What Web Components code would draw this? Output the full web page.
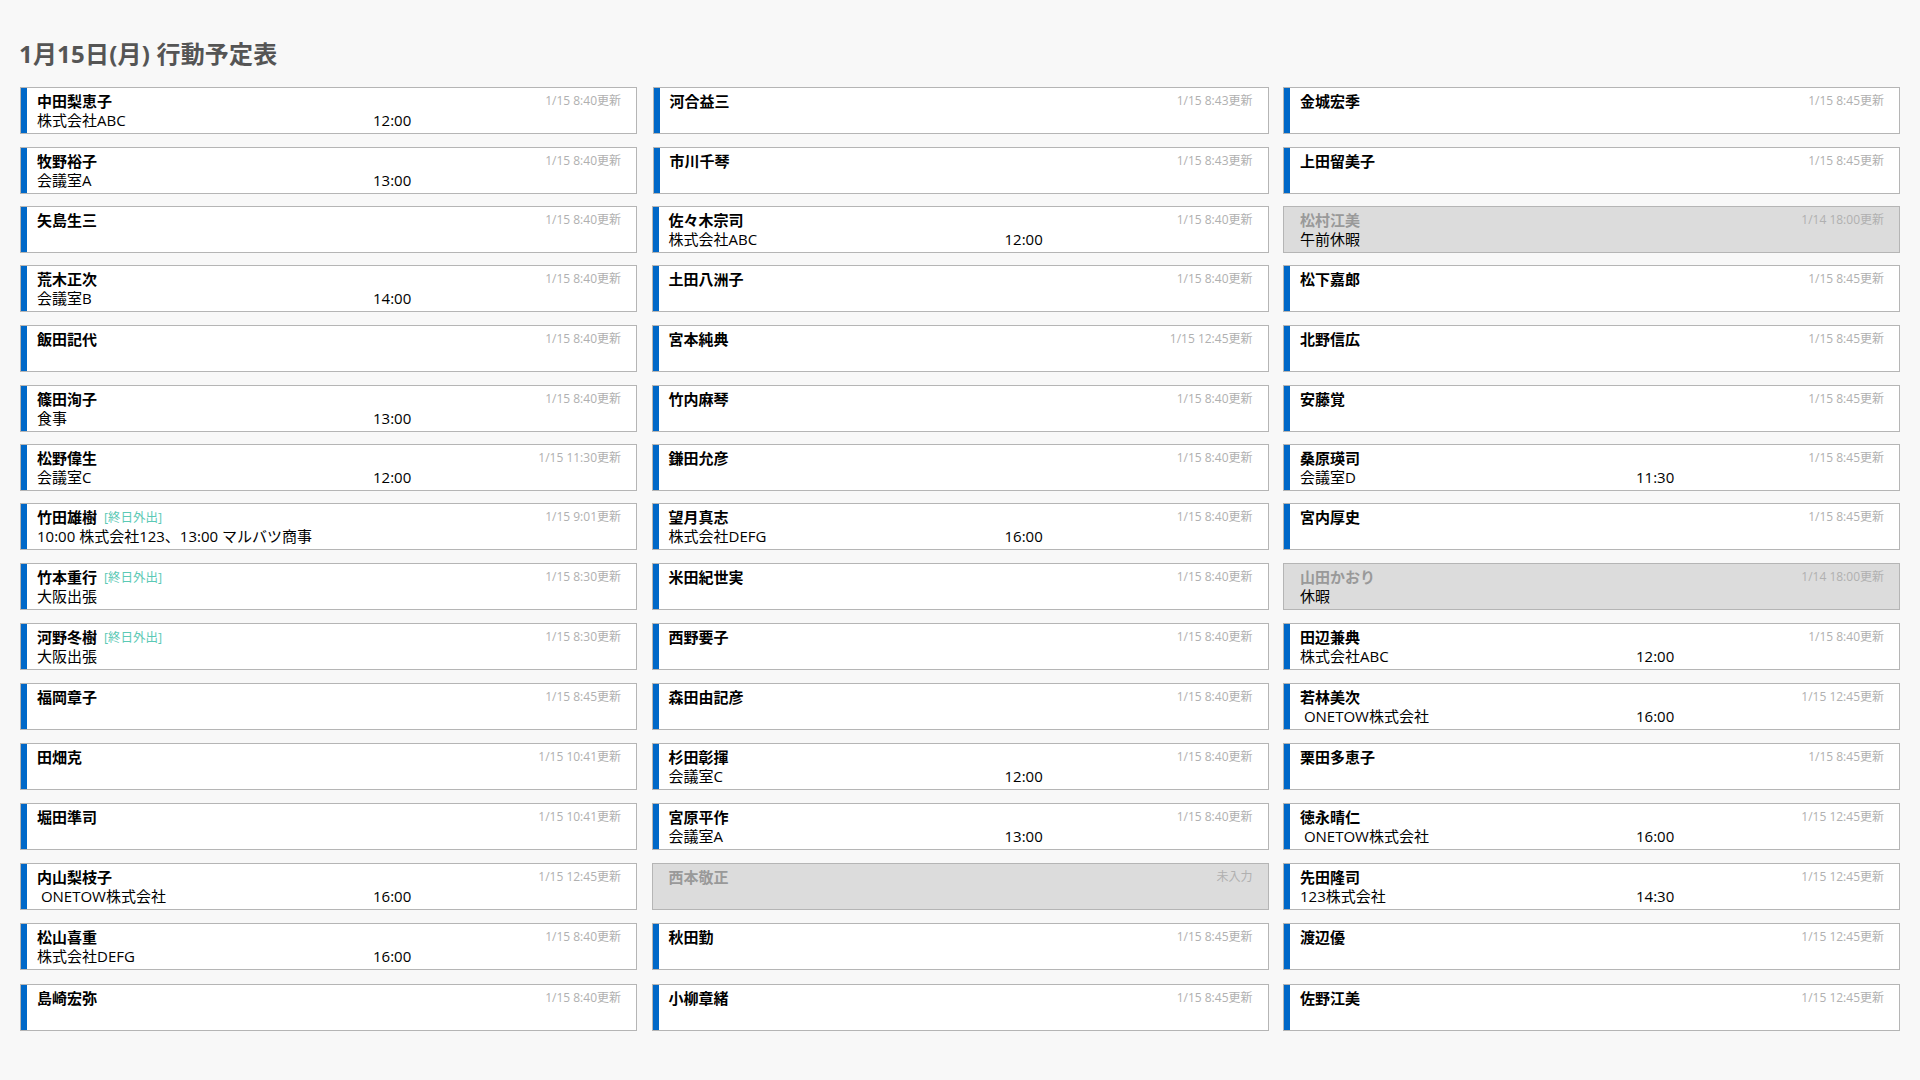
<!DOCTYPE html>
<html lang="ja">
<head>
<meta charset="utf-8">
<title>行動予定表</title>
<style>
  html, body { margin: 0; height: 100%; background: #f8f8f8; }
  body { font-family: "Open Sans", "Noto Sans CJK JP", sans-serif; }
</style>
</head>
<body>
<schedule-board heading="1月15日(月) 行動予定表">
  <schedule-column>
    <schedule-card updated="1/15 8:40更新" place="株式会社ABC" time="12:00">中田梨恵子</schedule-card>
    <schedule-card updated="1/15 8:40更新" place="会議室A" time="13:00">牧野裕子</schedule-card>
    <schedule-card updated="1/15 8:40更新">矢島生三</schedule-card>
    <schedule-card updated="1/15 8:40更新" place="会議室B" time="14:00">荒木正次</schedule-card>
    <schedule-card updated="1/15 8:40更新">飯田記代</schedule-card>
    <schedule-card updated="1/15 8:40更新" place="食事" time="13:00">篠田洵子</schedule-card>
    <schedule-card updated="1/15 11:30更新" place="会議室C" time="12:00">松野偉生</schedule-card>
    <schedule-card updated="1/15 9:01更新" tag="[終日外出]" place="10:00 株式会社123、13:00 マルバツ商事">竹田雄樹</schedule-card>
    <schedule-card updated="1/15 8:30更新" tag="[終日外出]" place="大阪出張">竹本重行</schedule-card>
    <schedule-card updated="1/15 8:30更新" tag="[終日外出]" place="大阪出張">河野冬樹</schedule-card>
    <schedule-card updated="1/15 8:45更新">福岡章子</schedule-card>
    <schedule-card updated="1/15 10:41更新">田畑克</schedule-card>
    <schedule-card updated="1/15 10:41更新">堀田準司</schedule-card>
    <schedule-card updated="1/15 12:45更新" place=" ONETOW株式会社" time="16:00">内山梨枝子</schedule-card>
    <schedule-card updated="1/15 8:40更新" place="株式会社DEFG" time="16:00">松山喜重</schedule-card>
    <schedule-card updated="1/15 8:40更新">島崎宏弥</schedule-card>
  </schedule-column>
  <schedule-column>
    <schedule-card style="margin-left: 1px" updated="1/15 8:43更新">河合益三</schedule-card>
    <schedule-card style="margin-left: 1px" updated="1/15 8:43更新">市川千琴</schedule-card>
    <schedule-card updated="1/15 8:40更新" place="株式会社ABC" time="12:00">佐々木宗司</schedule-card>
    <schedule-card updated="1/15 8:40更新">土田八洲子</schedule-card>
    <schedule-card updated="1/15 12:45更新">宮本純典</schedule-card>
    <schedule-card updated="1/15 8:40更新">竹内麻琴</schedule-card>
    <schedule-card updated="1/15 8:40更新">鎌田允彦</schedule-card>
    <schedule-card updated="1/15 8:40更新" place="株式会社DEFG" time="16:00">望月真志</schedule-card>
    <schedule-card updated="1/15 8:40更新">米田紀世実</schedule-card>
    <schedule-card updated="1/15 8:40更新">西野要子</schedule-card>
    <schedule-card updated="1/15 8:40更新">森田由記彦</schedule-card>
    <schedule-card updated="1/15 8:40更新" place="会議室C" time="12:00">杉田彰揮</schedule-card>
    <schedule-card updated="1/15 8:40更新" place="会議室A" time="13:00">宮原平作</schedule-card>
    <schedule-card updated="未入力" absent>西本敬正</schedule-card>
    <schedule-card updated="1/15 8:45更新">秋田勤</schedule-card>
    <schedule-card updated="1/15 8:45更新">小柳章緒</schedule-card>
  </schedule-column>
  <schedule-column>
    <schedule-card updated="1/15 8:45更新">金城宏季</schedule-card>
    <schedule-card updated="1/15 8:45更新">上田留美子</schedule-card>
    <schedule-card updated="1/14 18:00更新" place="午前休暇" absent>松村江美</schedule-card>
    <schedule-card updated="1/15 8:45更新">松下嘉郎</schedule-card>
    <schedule-card updated="1/15 8:45更新">北野信広</schedule-card>
    <schedule-card updated="1/15 8:45更新">安藤覚</schedule-card>
    <schedule-card updated="1/15 8:45更新" place="会議室D" time="11:30">桑原瑛司</schedule-card>
    <schedule-card updated="1/15 8:45更新">宮内厚史</schedule-card>
    <schedule-card updated="1/14 18:00更新" place="休暇" absent>山田かおり</schedule-card>
    <schedule-card updated="1/15 8:40更新" place="株式会社ABC" time="12:00">田辺兼典</schedule-card>
    <schedule-card updated="1/15 12:45更新" place=" ONETOW株式会社" time="16:00">若林美次</schedule-card>
    <schedule-card updated="1/15 8:45更新">栗田多恵子</schedule-card>
    <schedule-card updated="1/15 12:45更新" place=" ONETOW株式会社" time="16:00">徳永晴仁</schedule-card>
    <schedule-card updated="1/15 12:45更新" place="123株式会社" time="14:30">先田隆司</schedule-card>
    <schedule-card updated="1/15 12:45更新">渡辺優</schedule-card>
    <schedule-card updated="1/15 12:45更新">佐野江美</schedule-card>
  </schedule-column>
</schedule-board>
<script>
const html = String.raw;

const boardTemplate = document.createElement('template');
boardTemplate.innerHTML = html`
  <style>
    :host {
      display: block;
      box-sizing: border-box;
      height: 100vh;
      padding: 37px 20px 0;
    }
    h1 {
      margin: 0 0 16px -1px;
      font-size: 24px;
      line-height: 34px;
      font-weight: 700;
      letter-spacing: 0.2px;
      color: #555;
    }
    .columns {
      display: grid;
      grid-template-columns: repeat(3, 617px);
      column-gap: 14.5px;
    }
  </style>
  <h1></h1>
  <div class="columns"><slot></slot></div>
`;

class ScheduleBoard extends HTMLElement {
  connectedCallback() {
    const root = this.attachShadow({mode: 'open'});
    root.appendChild(boardTemplate.content.cloneNode(true));
    root.querySelector('h1').textContent = this.getAttribute('heading');
  }
}

const columnTemplate = document.createElement('template');
columnTemplate.innerHTML = html`
  <style>
    :host {
      display: grid;
      /* the rows of the reference are not evenly spaced */
      grid-template-rows: 60px 59px 59px 60px 60px 59px 59px 60px 60px 60px 60px 60px 60px 60px 61px 47px;
    }
  </style>
  <slot></slot>
`;

class ScheduleColumn extends HTMLElement {
  connectedCallback() {
    this.attachShadow({mode: 'open'}).appendChild(columnTemplate.content.cloneNode(true));
  }
}

const cardTemplate = document.createElement('template');
cardTemplate.innerHTML = html`
  <style>
    :host {
      display: grid;
      box-sizing: border-box;
      height: 47px;
      grid-template-columns: 336px 1fr;
      grid-template-rows: 19px 20px;
      align-content: start;
      padding: 3px 15px 0 16px;
      background: #fff;
      border: 1px solid #b5b5b5;
      box-shadow: inset 6px 0 0 #0068c8;
      font-size: 15px;
      color: #000;
      overflow: hidden;
    }
    :host([absent]) {
      background: #dcdcdc;
      box-shadow: none;
    }
    .head {
      grid-column: 1 / -1;
      display: flex;
      align-items: flex-start;
      line-height: 20px;
    }
    .name {
      font-weight: 700;
    }
    :host([absent]) .name {
      color: #999;
    }
    .tag {
      margin: 1px 0 0 7px;
      font-size: 12.5px;
      color: #5cc9b5;
    }
    .updated {
      margin-left: auto;
      font-size: 12px;
      color: #b0b0b0;
    }
    .place, .time {
      line-height: 20px;
      white-space: pre;
    }
  </style>
  <div class="head">
    <span class="name"><slot></slot></span>
    <span class="tag"></span>
    <span class="updated"></span>
  </div>
  <div class="place"></div>
  <div class="time"></div>
`;

class ScheduleCard extends HTMLElement {
  connectedCallback() {
    const root = this.attachShadow({mode: 'open'});
    root.appendChild(cardTemplate.content.cloneNode(true));
    root.querySelector('.tag').textContent = this.getAttribute('tag');
    root.querySelector('.updated').textContent = this.getAttribute('updated');
    root.querySelector('.place').textContent = this.getAttribute('place');
    root.querySelector('.time').textContent = this.getAttribute('time');
  }
}

customElements.define('schedule-board', ScheduleBoard);
customElements.define('schedule-column', ScheduleColumn);
customElements.define('schedule-card', ScheduleCard);
</script>
</body>
</html>
